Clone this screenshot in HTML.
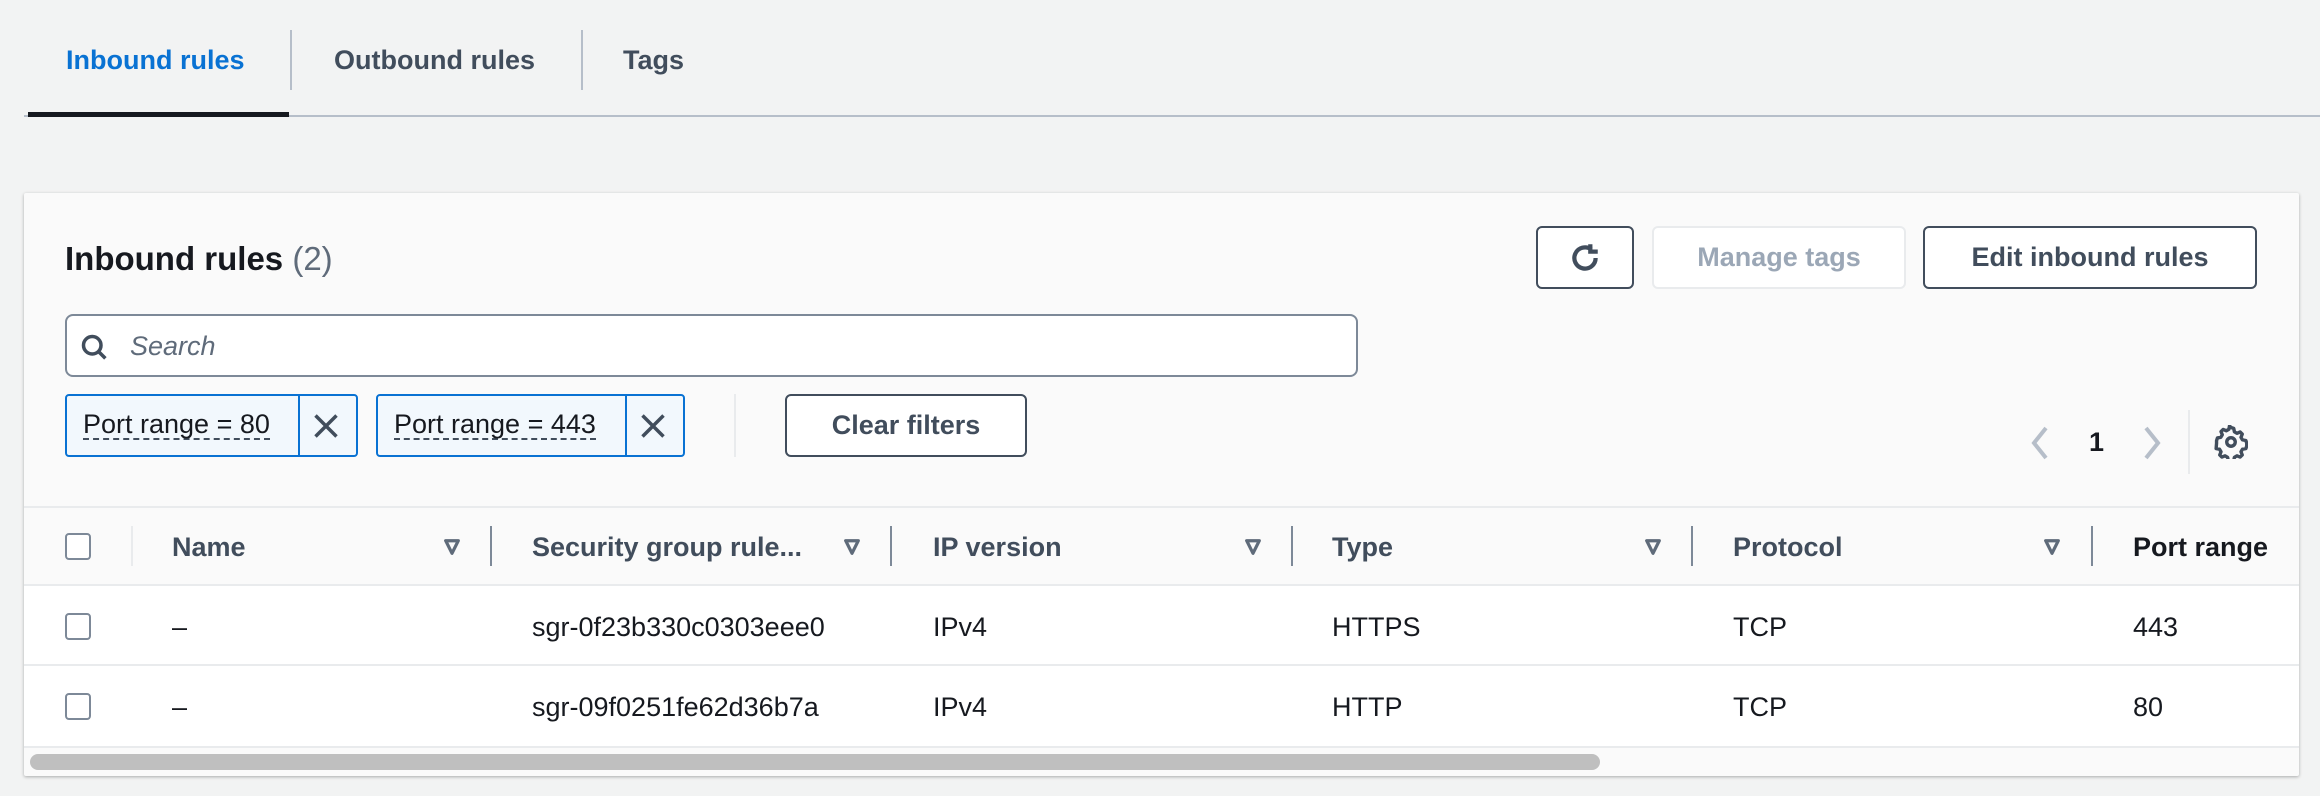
<!DOCTYPE html>
<html><head><meta charset="utf-8"><style>
*{box-sizing:border-box;margin:0;padding:0}
body{width:2320px;height:796px;background:#f2f3f3;font-family:"Liberation Sans",sans-serif;position:relative;overflow:hidden;color:#16191f}
.a{position:absolute}
.tab{position:absolute;top:45px;font-size:27px;font-weight:bold;color:#414d5c;line-height:30px}
.vd{position:absolute;width:2px;background:#b6bec9}
.btn{position:absolute;border:2px solid #414d5c;border-radius:6px;background:#fff;font-size:27px;font-weight:bold;color:#414d5c;display:flex;align-items:center;justify-content:center}
.th{position:absolute;top:532px;font-size:27px;font-weight:bold;color:#414d5c;line-height:30px}
.td{position:absolute;font-size:27px;color:#16191f;line-height:30px}
.cb{position:absolute;left:65px;width:26px;height:27px;border:2px solid #7d8998;border-radius:4px;background:#fff}
.tok{position:absolute;top:394px;height:63px;border:2px solid #0972d3;border-radius:4px;background:#f2f8fd}
.tok span{position:absolute;left:16px;top:14px;font-size:27px;color:#16191f;border-bottom:2px dashed #414d5c;line-height:28px}
.tok i{position:absolute;top:0;bottom:0;width:2px;background:#0972d3}
</style></head><body>
<div class="tab" style="left:66px;color:#0972d3">Inbound rules</div>
<div class="vd" style="left:290px;top:30px;height:60px"></div>
<div class="tab" style="left:334px">Outbound rules</div>
<div class="vd" style="left:581px;top:30px;height:60px"></div>
<div class="tab" style="left:623px">Tags</div>
<div class="a" style="left:24px;top:115px;width:2296px;height:2px;background:#b6bec9"></div>
<div class="a" style="left:28px;top:112px;width:261px;height:5px;background:#16191f"></div>

<div class="a" style="left:24px;top:193px;width:2275px;height:583px;background:#fafafa;border-radius:2px;box-shadow:0 1px 3px rgba(0,0,0,.3)"></div>
<div class="a" style="left:65px;top:240px;font-size:33px;font-weight:bold;line-height:38px">Inbound rules <span style="font-weight:normal;color:#5f6b7a">(2)</span></div>

<div class="btn" style="left:1536px;top:226px;width:98px;height:63px">
<svg width="34" height="34" viewBox="0 0 16 16"><path d="M13 8a5 5 0 1 1-2-4" fill="none" stroke="#414d5c" stroke-width="2"/><path d="M10.5 1.5v3.5h3.5" fill="none" stroke="#414d5c" stroke-width="2"/></svg></div>
<div class="btn" style="left:1652px;top:226px;width:254px;height:63px;border-color:#e9ebed;color:#9ba7b6">Manage tags</div>
<div class="btn" style="left:1923px;top:226px;width:334px;height:63px">Edit inbound rules</div>

<div class="a" style="left:65px;top:314px;width:1293px;height:63px;border:2px solid #7d8998;border-radius:8px;background:#fff"></div>
<svg class="a" style="left:80px;top:332px" width="28" height="30" viewBox="0 0 16 16"><circle cx="7" cy="7" r="5" fill="none" stroke="#414d5c" stroke-width="2"/><path d="M10.5 10.5l4 4" stroke="#414d5c" stroke-width="2"/></svg>
<div class="a" style="left:130px;top:331px;font-size:27px;font-style:italic;color:#5f6b7a">Search</div>

<div class="tok" style="left:65px;width:293px"><span>Port range = 80</span><i style="left:231px"></i>
<svg class="a" style="left:245px;top:16px" width="28" height="28" viewBox="0 0 16 16"><path d="M2 2l12 12M14 2L2 14" stroke="#414d5c" stroke-width="2"/></svg></div>
<div class="tok" style="left:376px;width:309px"><span>Port range = 443</span><i style="left:247px"></i>
<svg class="a" style="left:261px;top:16px" width="28" height="28" viewBox="0 0 16 16"><path d="M2 2l12 12M14 2L2 14" stroke="#414d5c" stroke-width="2"/></svg></div>
<div class="a" style="left:734px;top:394px;width:2px;height:63px;background:#e9ebed"></div>
<div class="btn" style="left:785px;top:394px;width:242px;height:63px">Clear filters</div>

<svg class="a" style="left:2030px;top:426px" width="20" height="34" viewBox="0 0 10 17"><path d="M8 1L2 8.5 8 16" fill="none" stroke="#b6bec9" stroke-width="2"/></svg>
<div class="a" style="left:2089px;top:427px;font-size:27px;font-weight:bold">1</div>
<svg class="a" style="left:2142px;top:426px" width="20" height="34" viewBox="0 0 10 17"><path d="M2 1l6 7.5L2 16" fill="none" stroke="#b6bec9" stroke-width="2"/></svg>
<div class="a" style="left:2188px;top:410px;width:2px;height:64px;background:#e9ebed"></div>
<svg class="a" style="left:2214px;top:425px" width="34" height="34" viewBox="0 0 16 16"><path d="M8 1.2l1.3.4.3 1.6 1.2.7 1.5-.6 1 1-.6 1.5.7 1.2 1.6.3.4 1.3v1.2l-.4 1.3-1.6.3-.7 1.2.6 1.5-1 1-1.5-.6-1.2.7-.3 1.6-1.3.4h-.0l-1.3-.4-.3-1.6-1.2-.7-1.5.6-1-1 .6-1.5-.7-1.2-1.6-.3L1.2 8.6V7.4l.4-1.3 1.6-.3.7-1.2-.6-1.5 1-1 1.5.6 1.2-.7.3-1.6z" fill="none" stroke="#414d5c" stroke-width="1.6" stroke-linejoin="round"/><circle cx="8" cy="8" r="2" fill="none" stroke="#414d5c" stroke-width="1.6"/></svg>

<div class="a" style="left:24px;top:506px;width:2275px;height:2px;background:#e9ebed"></div>
<div class="a" style="left:24px;top:585px;width:2275px;height:162px;background:#fff"></div>
<div class="a" style="left:24px;top:584px;width:2275px;height:2px;background:#e9ebed"></div>
<div class="a" style="left:24px;top:664px;width:2275px;height:2px;background:#e9ebed"></div>
<div class="a" style="left:24px;top:746px;width:2275px;height:2px;background:#e9ebed"></div>
<div class="a" style="left:30px;top:754px;width:1570px;height:16px;border-radius:8px;background:#bfbfbf"></div>

<div class="cb" style="top:533px"></div>
<div class="a" style="left:131px;top:526px;width:2px;height:40px;background:#e9ebed"></div>
<div class="th" style="left:172px">Name</div>
<div class="th" style="left:532px">Security group rule...</div>
<div class="th" style="left:933px">IP version</div>
<div class="th" style="left:1332px">Type</div>
<div class="th" style="left:1733px">Protocol</div>
<div class="th" style="left:2133px;color:#16191f">Port range</div>
<svg class="a" style="left:443px;top:538px" width="18" height="18" viewBox="0 0 10 10"><path d="M1.5 1.5h7L5 8.5z" fill="none" stroke="#5f6b7a" stroke-width="1.8" stroke-linejoin="round"/></svg>
<svg class="a" style="left:843px;top:538px" width="18" height="18" viewBox="0 0 10 10"><path d="M1.5 1.5h7L5 8.5z" fill="none" stroke="#5f6b7a" stroke-width="1.8" stroke-linejoin="round"/></svg>
<svg class="a" style="left:1244px;top:538px" width="18" height="18" viewBox="0 0 10 10"><path d="M1.5 1.5h7L5 8.5z" fill="none" stroke="#5f6b7a" stroke-width="1.8" stroke-linejoin="round"/></svg>
<svg class="a" style="left:1644px;top:538px" width="18" height="18" viewBox="0 0 10 10"><path d="M1.5 1.5h7L5 8.5z" fill="none" stroke="#5f6b7a" stroke-width="1.8" stroke-linejoin="round"/></svg>
<svg class="a" style="left:2043px;top:538px" width="18" height="18" viewBox="0 0 10 10"><path d="M1.5 1.5h7L5 8.5z" fill="none" stroke="#5f6b7a" stroke-width="1.8" stroke-linejoin="round"/></svg>
<div class="a" style="left:490px;top:526px;width:2px;height:40px;background:#7d8998"></div>
<div class="a" style="left:890px;top:526px;width:2px;height:40px;background:#7d8998"></div>
<div class="a" style="left:1291px;top:526px;width:2px;height:40px;background:#7d8998"></div>
<div class="a" style="left:1691px;top:526px;width:2px;height:40px;background:#7d8998"></div>
<div class="a" style="left:2091px;top:526px;width:2px;height:40px;background:#7d8998"></div>

<div class="cb" style="top:613px"></div>
<div class="td" style="left:172px;top:612px">–</div>
<div class="td" style="left:532px;top:612px">sgr-0f23b330c0303eee0</div>
<div class="td" style="left:933px;top:612px">IPv4</div>
<div class="td" style="left:1332px;top:612px">HTTPS</div>
<div class="td" style="left:1733px;top:612px">TCP</div>
<div class="td" style="left:2133px;top:612px">443</div>

<div class="cb" style="top:693px"></div>
<div class="td" style="left:172px;top:692px">–</div>
<div class="td" style="left:532px;top:692px">sgr-09f0251fe62d36b7a</div>
<div class="td" style="left:933px;top:692px">IPv4</div>
<div class="td" style="left:1332px;top:692px">HTTP</div>
<div class="td" style="left:1733px;top:692px">TCP</div>
<div class="td" style="left:2133px;top:692px">80</div>
</body></html>
